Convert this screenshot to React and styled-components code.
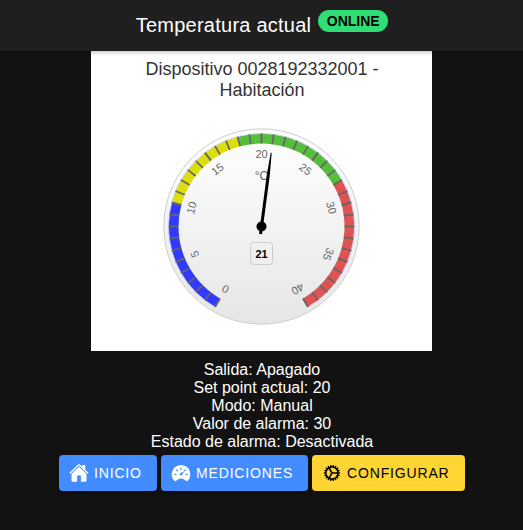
import React from 'react';
import styled, { createGlobalStyle } from 'styled-components';
import { IoHome, IoSpeedometer, IoCog } from 'react-icons/io5';

const GlobalStyle = createGlobalStyle`
  *, *::before, *::after { box-sizing: border-box; }
  body {
    margin: 0;
    background: #121212;
    color: #fff;
    font-family: "Liberation Sans", Arial, sans-serif;
  }
`;

const Page = styled.div`
  min-height: 530px;
  display: flex;
  flex-direction: column;
  align-items: center;
  background: #121212;
`;

const Header = styled.header`
  position: relative;
  z-index: 1;
  width: 100%;
  height: 51px;
  display: flex;
  justify-content: center;
  align-items: flex-start;
  gap: 7px;
  background: #1f1f1f;
  box-shadow: 0 2px 4px -1px rgba(0, 0, 0, 0.2), 0 1px 5px rgba(0, 0, 0, 0.12);
`;

const Title = styled.h1`
  margin: 13px 0 0 1px;
  font-size: 20px;
  line-height: 24px;
  font-weight: 400;
  letter-spacing: 0.24px;
  white-space: nowrap;
`;

const Badge = styled.span`
  margin-top: 10px;
  width: 70px;
  height: 22px;
  border-radius: 11px;
  background: #2fdf75;
  color: #000;
  font-size: 14px;
  line-height: 22px;
  font-weight: 700;
  text-align: center;
`;

const ChartCard = styled.section`
  width: 341px;
  height: 300px;
  background: #fff;
  color: #333;
  text-align: center;
`;

const ChartTitle = styled.h2`
  margin: 0;
  padding: 8px 0 0 1px;
  height: 69px;
  font-size: 18px;
  line-height: 21px;
  font-weight: 400;
`;

const GaugeSvg = styled.svg`
  display: block;
  font-family: "Liberation Sans", Arial, sans-serif;
`;

const Readings = styled.div`
  margin-top: 10px;
  padding-left: 1px;
  font-size: 16px;
  line-height: 18px;
  text-align: center;
`;

const Actions = styled.nav`
  margin-top: 4px;
  display: flex;
  gap: 4px;
`;

const Button = styled.button`
  width: ${(p) => p.$width}px;
  height: 36px;
  padding: 0 0 0 10px;
  border: 0;
  border-radius: 4px;
  display: flex;
  align-items: center;
  gap: 5.5px;
  background: ${(p) => (p.$warning ? '#ffd534' : '#428cff')};
  color: ${(p) => (p.$warning ? '#000' : '#fff')};
  font-family: inherit;
  font-size: 14px;
  letter-spacing: 0.84px;
  white-space: nowrap;
  box-shadow: 0 3px 1px -2px rgba(0, 0, 0, 0.2), 0 2px 2px rgba(0, 0, 0, 0.14), 0 1px 5px rgba(0, 0, 0, 0.12);

  svg {
    flex: none;
    font-size: 20px;
  }
`;

const CX = 170.5;
const CY = 106.5;
const RADIUS = 93;
const angleOf = (value) => -150 + value * 7.5;
const pointAt = (value, r) => {
  const a = (angleOf(value) * Math.PI) / 180;
  return `${CX + r * Math.sin(a)} ${CY - r * Math.cos(a)}`;
};
const band = (from, to) =>
  `M${pointAt(from, RADIUS)}A${RADIUS} ${RADIUS} 0 0 1 ${pointAt(to, RADIUS)}` +
  `L${pointAt(to, 83)}A83 83 0 0 0 ${pointAt(from, 83)}Z`;

const BANDS = [
  [0, 10, '#333aff'],
  [10, 18, '#dddf0d'],
  [18, 28, '#55bf3b'],
  [28, 40, '#df5353'],
];

function Gauge({ value }) {
  const ticks = Array.from({ length: 41 }, (_, i) => i);
  const labels = ticks.filter((t) => t % 5 === 0);
  return (
    <GaugeSvg width="341" height="231">
      <defs>
        <linearGradient id="face" x1="0" y1="0" x2="0" y2="1">
          <stop offset="0" stopColor="#fff" />
          <stop offset="1" stopColor="#e6e6e6" />
        </linearGradient>
      </defs>
      <circle cx={CX} cy={CY} r="97.65" fill="url(#face)" stroke="#ccc" />
      {BANDS.map(([from, to, fill]) => (
        <path key={from} d={band(from, to)} fill={fill} />
      ))}
      <path
        d={`M${pointAt(0, RADIUS)}A${RADIUS} ${RADIUS} 0 1 1 ${pointAt(40, RADIUS)}`}
        fill="none"
        stroke="#ccd6eb"
      />
      {ticks.map((t) => (
        <path
          key={t}
          d={`M${CX} ${CY - RADIUS}v10`}
          transform={`rotate(${angleOf(t)} ${CX} ${CY})`}
          stroke="#666"
          strokeWidth={t % 5 === 0 ? 2 : 1.7}
        />
      ))}
      {labels.map((t) => (
        <text
          key={t}
          x={CX}
          y={CY - 68.5}
          transform={`rotate(${angleOf(t)} ${CX} ${CY})`}
          textAnchor="middle"
          fontSize="11"
          fill="#666"
        >
          {t}
        </text>
      ))}
      <text x={CX} y="60" textAnchor="middle" fontSize="12" fill="#666">°C</text>
      <rect x="159.5" y="122.5" width="22" height="22" rx="3" fill="none" stroke="#ccc" />
      <text x={CX} y="138" textAnchor="middle" fontSize="11" fontWeight="700" fill="#000">{value}</text>
      <path
        d={`M${CX - 1.5} ${CY + 7.5}L${CX - 1.5} ${CY - 52}L${CX - 0.5} ${CY - 74.4}h1L${CX + 1.5} ${CY - 52}V${CY + 7.5}Z`}
        transform={`rotate(${angleOf(value)} ${CX} ${CY})`}
      />
      <circle cx={CX} cy={CY} r="5" />
    </GaugeSvg>
  );
}

export default function App() {
  return (
    <>
      <GlobalStyle />
      <Page>
        <Header>
          <Title>Temperatura actual</Title>
          <Badge>ONLINE</Badge>
        </Header>
        <ChartCard>
          <ChartTitle>
            Dispositivo 0028192332001 -<br />Habitación
          </ChartTitle>
          <Gauge value={21} />
        </ChartCard>
        <Readings>
          <div>Salida: Apagado</div>
          <div>Set point actual: 20</div>
          <div>Modo: Manual</div>
          <div>Valor de alarma: 30</div>
          <div>Estado de alarma: Desactivada</div>
        </Readings>
        <Actions>
          <Button $width={98}><IoHome />INICIO</Button>
          <Button $width={147}><IoSpeedometer />MEDICIONES</Button>
          <Button $width={153} $warning><IoCog />CONFIGURAR</Button>
        </Actions>
      </Page>
    </>
  );
}
